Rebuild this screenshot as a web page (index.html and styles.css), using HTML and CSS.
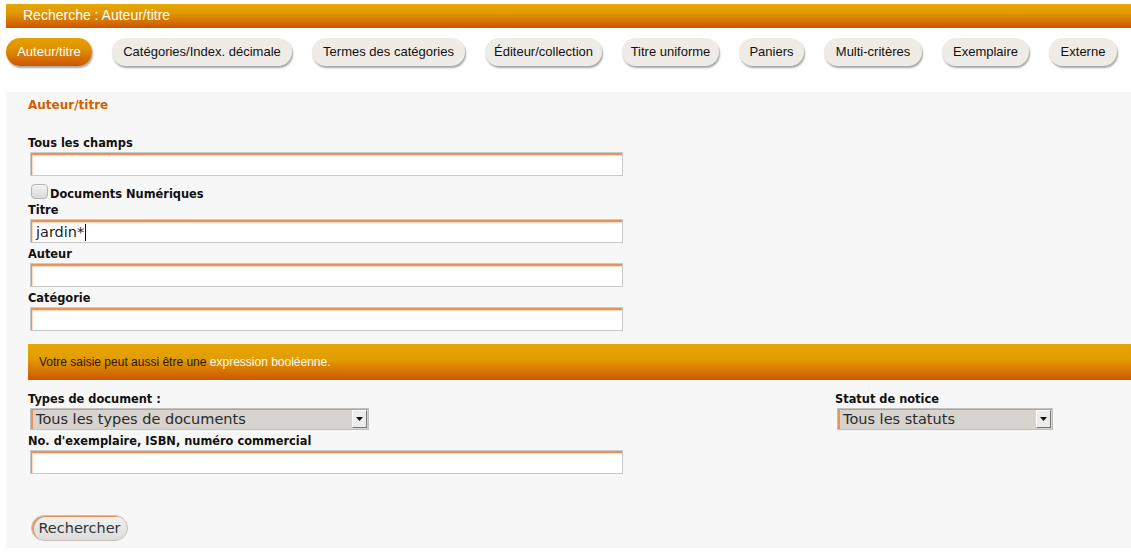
FILE: index.html
```html
<!DOCTYPE html>
<html lang="fr">
<head>
<meta charset="utf-8">
<title>Recherche : Auteur/titre</title>
<link rel="stylesheet" href="styles.css">
</head>
<body>
<div class="page">
  <div class="title-bar">Recherche : Auteur/titre</div>
  <nav class="tabs">
    <span class="tab tab-auteur active">Auteur/titre</span>
    <span class="tab tab-categories">Catégories/Index. décimale</span>
    <span class="tab tab-termes">Termes des catégories</span>
    <span class="tab tab-editeur">Éditeur/collection</span>
    <span class="tab tab-titre">Titre uniforme</span>
    <span class="tab tab-paniers">Paniers</span>
    <span class="tab tab-multi">Multi-critères</span>
    <span class="tab tab-exemplaire">Exemplaire</span>
    <span class="tab tab-externe">Externe</span>
  </nav>
  <section class="panel">
    <h2 class="panel-title">Auteur/titre</h2>
    <div class="field first">
      <label class="label">Tous les champs</label>
      <input class="text" type="text" value="">
    </div>
    <div class="check-row">
      <span class="checkbox"></span>
      <span class="check-label">Documents Numériques</span>
    </div>
    <div class="field">
      <label class="label">Titre</label>
      <div class="text text-filled">jardin*<span class="caret"></span></div>
    </div>
    <div class="field">
      <label class="label">Auteur</label>
      <input class="text" type="text" value="">
    </div>
    <div class="field">
      <label class="label">Catégorie</label>
      <input class="text" type="text" value="">
    </div>
    <div class="notice">Votre saisie peut aussi être une <span class="notice-link">expression booléenne.</span></div>
    <div class="cols">
      <div class="col">
        <div class="field">
          <label class="label">Types de document :</label>
          <div class="select select-wide">
            <span class="select-value">Tous les types de documents</span>
            <span class="select-btn"><svg width="7" height="4" viewBox="0 0 7 4"><path d="M0 0H7L3.5 4Z" fill="#111"/></svg></span>
          </div>
        </div>
        <div class="field">
          <label class="label">No. d'exemplaire, ISBN, numéro commercial</label>
          <input class="text" type="text" value="">
        </div>
      </div>
      <div class="col">
        <div class="field">
          <label class="label">Statut de notice</label>
          <div class="select select-narrow">
            <span class="select-value">Tous les statuts</span>
            <span class="select-btn"><svg width="7" height="4" viewBox="0 0 7 4"><path d="M0 0H7L3.5 4Z" fill="#111"/></svg></span>
          </div>
        </div>
      </div>
    </div>
    <div class="actions">
      <button class="btn" type="button">Rechercher</button>
    </div>
  </section>
</div>
</body>
</html>
```
FILE: styles.css
```css
html, body {
  margin: 0;
  padding: 0;
  background: #ffffff;
}

.page {
  padding: 4px 0 0 6px;
  font-family: "Liberation Sans", Arial, sans-serif;
}

.title-bar {
  height: 24px;
  line-height: 23px;
  padding-left: 17px;
  color: #ffffff;
  font-size: 14px;
  background: linear-gradient(#e6a600 0%, #e29a00 35%, #cf5400 100%);
}

.tabs {
  display: flex;
  align-items: center;
  gap: 20px;
  margin-top: 9px;
  height: 29px;
}

.tab {
  box-sizing: border-box;
  height: 28px;
  line-height: 27px;
  padding: 0 4px;
  text-align: center;
  border-radius: 14px;
  background: #efebe6;
  color: #111111;
  font-size: 13px;
  white-space: nowrap;
  box-shadow: 1px 2px 2px rgba(0, 0, 0, 0.35);
}

.tab-auteur { width: 86px; }
.tab-categories { width: 180px; }
.tab-termes { width: 153px; }
.tab-editeur { width: 117px; }
.tab-titre { width: 97px; }
.tab-paniers { width: 65px; }
.tab-multi { width: 98px; }
.tab-exemplaire { width: 87px; }
.tab-externe { width: 68px; }

.tab.active {
  color: #ffffff;
  background: linear-gradient(#e6a200 0%, #e08f00 40%, #cf5500 100%);
}

.panel {
  margin-top: 26px;
  background: #f7f7f7;
  padding: 6px 0 7px 22px;
  font-family: "DejaVu Sans", Verdana, sans-serif;
}

.panel-title {
  margin: 0;
  font-size: 12px;
  line-height: 14px;
  font-weight: bold;
  color: #d25f00;
}

.field.first {
  margin-top: 20px;
}

.label {
  display: block;
  padding: 4px 0 2px;
  line-height: 14px;
  font-size: 11.4px;
  font-weight: bold;
  color: #111111;
}

.text {
  display: block;
  box-sizing: border-box;
  width: 593px;
  height: 24px;
  margin: 0 0 0 2px;
  padding: 0 4px;
  border: 1px solid #c9c9c9;
  background: #ffffff;
  box-shadow: inset 1px 2px 0 #e8935c, inset 2px 3px 1px #f9d6bb;
  font-family: "DejaVu Sans", Verdana, sans-serif;
  font-size: 14.5px;
  color: #222222;
  outline: none;
}

.text-filled {
  display: flex;
  align-items: center;
  padding-left: 5px;
  padding-top: 2px;
}

.caret {
  display: inline-block;
  width: 1px;
  height: 17px;
  margin-left: 1px;
  background: #111111;
}

.check-row {
  display: flex;
  align-items: flex-end;
  margin-top: 6px;
  height: 17px;
}

.checkbox {
  box-sizing: border-box;
  width: 17px;
  height: 15px;
  margin-left: 3px;
  border: 1px solid #b5b5b5;
  border-radius: 4px;
  background: linear-gradient(#f4f4f4, #d9d9d9);
}

.check-label {
  margin-left: 2px;
  margin-bottom: -2px;
  font-size: 11.4px;
  font-weight: bold;
  line-height: 13px;
  color: #111111;
}

.notice {
  margin-top: 13px;
  height: 36px;
  line-height: 37px;
  padding-left: 11px;
  background: linear-gradient(#e6a600 0%, #e29e00 40%, #cd5600 100%);
  font-family: "Liberation Sans", Arial, sans-serif;
  font-size: 12px;
  color: #2a1800;
}

.notice-link {
  color: #fffaf0;
}

.cols {
  display: grid;
  grid-template-columns: 807px 1fr;
  margin-top: 8px;
}

.select {
  display: flex;
  align-items: center;
  box-sizing: border-box;
  height: 22px;
  margin-left: 2px;
  border: 1px solid #c4c0bc;
  background: #d7d3cf;
  box-shadow: inset 2px 1px 0 #e8935c;
  font-size: 14.5px;
  color: #2a2a2a;
}

.select-wide {
  width: 339px;
}

.select-narrow {
  width: 216px;
}

.select-value {
  flex: 1;
  padding-left: 5px;
  white-space: nowrap;
  overflow: hidden;
  line-height: 20px;
}

.select-btn {
  display: flex;
  align-items: center;
  justify-content: center;
  box-sizing: border-box;
  width: 15px;
  height: 18px;
  margin-right: 1px;
  background: #ececec;
  border-top: 1px solid #ffffff;
  border-left: 1px solid #ffffff;
  border-right: 1px solid #777777;
  border-bottom: 1px solid #777777;
}

.actions {
  margin-top: 41px;
}

.btn {
  box-sizing: border-box;
  width: 97px;
  height: 26px;
  margin-left: 3px;
  padding: 0;
  border: 1px solid #c8c0b8;
  border-radius: 13px;
  background: linear-gradient(#f2f2f2, #dcdcdc);
  box-shadow: inset 2px 1px 0 #e8935c;
  font-family: "DejaVu Sans", Verdana, sans-serif;
  font-size: 14.5px;
  color: #333333;
}
```
